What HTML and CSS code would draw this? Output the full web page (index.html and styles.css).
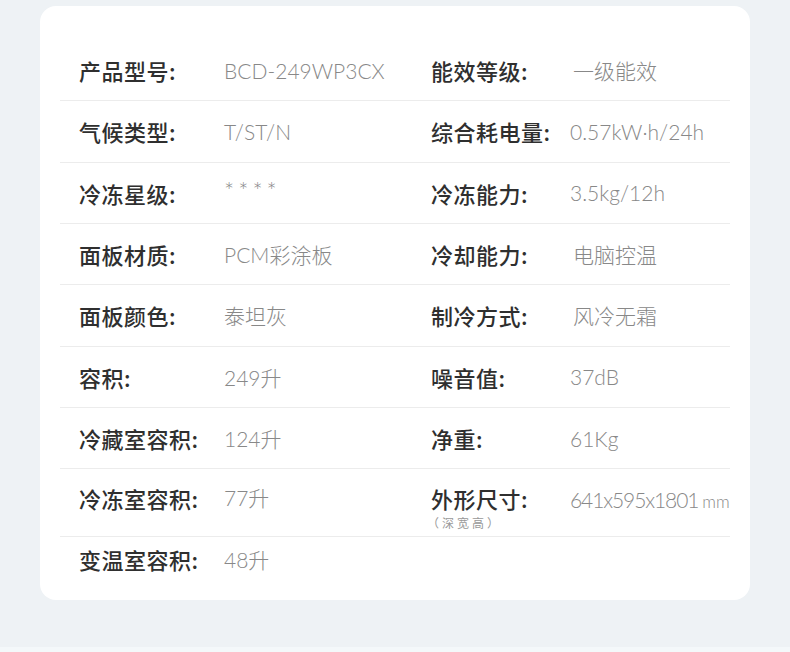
FILE: index.html
```html
<!DOCTYPE html>
<html lang="zh-CN">
<head>
    <meta charset="UTF-8">
    <meta name="viewport" content="width=device-width, initial-scale=1.0">
    <title>产品参数</title>
    <link rel="stylesheet" href="styles.css">
</head>
<body>

    <div class="spec-card">
        <div class="spec-row">
            <span class="label">产品型号:</span>
            <span class="value">BCD-249WP3CX</span>
            <span class="label">能效等级:</span>
            <span class="value cn-pad">一级能效</span>
        </div>
        <div class="spec-row">
            <span class="label">气候类型:</span>
            <span class="value">T/ST/N</span>
            <span class="label">综合耗电量:</span>
            <span class="value">0.57kW·h/24h</span>
        </div>
        <div class="spec-row">
            <span class="label">冷冻星级:</span>
            <span class="value stars">****</span>
            <span class="label">冷冻能力:</span>
            <span class="value">3.5kg/12h</span>
        </div>
        <div class="spec-row">
            <span class="label">面板材质:</span>
            <span class="value">PCM彩涂板</span>
            <span class="label">冷却能力:</span>
            <span class="value cn-pad">电脑控温</span>
        </div>
        <div class="spec-row">
            <span class="label">面板颜色:</span>
            <span class="value">泰坦灰</span>
            <span class="label">制冷方式:</span>
            <span class="value cn-pad">风冷无霜</span>
        </div>
        <div class="spec-row">
            <span class="label">容积:</span>
            <span class="value">249升</span>
            <span class="label">噪音值:</span>
            <span class="value">37dB</span>
        </div>
        <div class="spec-row">
            <span class="label">冷藏室容积:</span>
            <span class="value">124升</span>
            <span class="label">净重:</span>
            <span class="value">61Kg</span>
        </div>
        <div class="spec-row tall">
            <span class="label">冷冻室容积:</span>
            <span class="value">77升</span>
            <span class="label label-stack">外形尺寸:<small class="sub">（深宽高）</small></span>
            <span class="value size">641x595x1801<small>mm</small></span>
        </div>
        <div class="spec-row last">
            <span class="label">变温室容积:</span>
            <span class="value">48升</span>
        </div>
    </div>

    <div class="bottom-strip"></div>

</body>
</html>
```

FILE: styles.css
```css
body {
    margin: 0;
    padding: 6px 40px 0;
    background: #eef2f5;
    font-family: "Noto Sans CJK SC", "Noto Sans", sans-serif;
    color: #333;
    height: 652px;
    box-sizing: border-box;
    position: relative;
    overflow: hidden;
}

.spec-card {
    background: #fff;
    border-radius: 16px;
    padding: 34px 20px 0;
    height: 594px;
    box-sizing: border-box;
}

.spec-row {
    display: grid;
    grid-template-columns: 145px 207px 139px 1fr;
    align-items: center;
    height: 61.33px;
    box-sizing: border-box;
    padding-left: 19px;
    border-bottom: 1px solid #ececec;
}

.spec-row.tall {
    height: 68px;
    align-items: start;
    padding-top: 14px;
}

.spec-row.tall .label,
.spec-row.tall .value {
    line-height: 30px;
}

.spec-row.last {
    border-bottom: none;
    height: 44px;
}

.label {
    font-size: 22px;
    font-weight: 500;
    color: #2f2f2f;
    letter-spacing: 0.5px;
}

.label-stack {
    display: flex;
    flex-direction: column;
}

.label-stack .sub {
    margin: 3px 0 0 -4px;
    font-size: 12px;
    line-height: 14px;
    font-weight: 400;
    color: #999;
    letter-spacing: 3px;
    white-space: nowrap;
}

.value {
    font-family: "Lato", "Noto Sans CJK SC", sans-serif;
    font-weight: 300;
    font-size: 21px;
    color: #888;
    white-space: nowrap;
}

.value.cn-pad {
    padding-left: 3px;
}

.value.stars {
    font-size: 24px;
    letter-spacing: 4px;
    position: relative;
    top: -2px;
}

.value.size {
    letter-spacing: -1.1px;
    margin-top: 2px;
}

.value.size small {
    font-size: 17px;
    letter-spacing: 0;
    margin-left: 4px;
}

.bottom-strip {
    position: absolute;
    left: 0;
    right: 0;
    bottom: 0;
    height: 5px;
    background: #f4f8fa;
}
```
